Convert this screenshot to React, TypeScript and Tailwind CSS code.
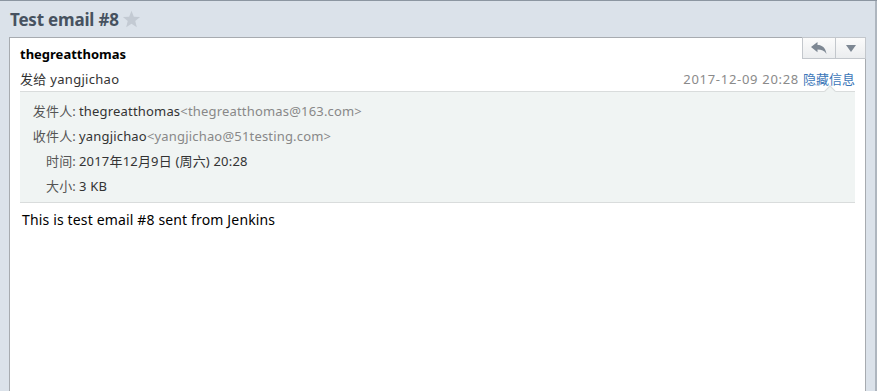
import React from "react";

const font = { fontFamily: '"Noto Sans", "Noto Sans CJK SC", sans-serif' };

export default function App() {
  return (
    <div
      className="w-[877px] h-[391px] overflow-hidden bg-[#dbe2ea] border-t border-[#8c96a1] flex"
      style={font}
    >
      <div className="flex-1 flex flex-col min-w-0">
        <div className="h-[36px] flex items-center pl-[10px] gap-[3px]">
          <span className="text-[17px] font-bold text-[#475260] leading-none tracking-[-0.2px]">Test email #8</span>
          <svg width="19" height="18" viewBox="0 0 24 23" className="mt-[-1px]">
            <path
              d="M12 1 L15 8.6 L23 9.1 L16.8 14.2 L18.8 22 L12 17.6 L5.2 22 L7.2 14.2 L1 9.1 L9 8.6 Z"
              fill="#c3cad3"
            />
          </svg>
        </div>
        <div className="flex-1 ml-[9px] mr-[9px] bg-white border border-[#a7abb0] border-b-0 relative">
          <div className="absolute top-[-1px] right-[-1px] flex h-[22px] border border-[#c3c7cc] bg-gradient-to-b from-[#fbfbfb] to-[#ebedef]">
            <div className="w-[33px] flex items-center justify-center border-r border-[#c3c7cc]">
              <svg width="16" height="12" viewBox="0 0 16 12">
                <path d="M0 5 L6.5 0 L6.5 3 C11 3 14.5 5.5 15.5 12 C13.5 8.8 10.5 7.6 6.5 7.6 L6.5 10.2 Z" fill="#7d8793" />
              </svg>
            </div>
            <div className="w-[29px] flex items-center justify-center">
              <svg width="10" height="7" viewBox="0 0 10 7">
                <path d="M0 0 L10 0 L5 7 Z" fill="#7d8793" />
              </svg>
            </div>
          </div>
          <div className="px-[10px]">
            <div className="pt-[7px] h-[28px] text-[13px] font-bold text-black leading-[18px]">thegreatthomas</div>
            <div className="h-[24px] flex items-center justify-between text-[13px] leading-[18px] pt-[1px]">
              <span className="text-[#333] tracking-[0.3px]">发给 yangjichao</span>
              <span>
                <span className="text-[#8a8a8a] tracking-[0.7px]">2017-12-09 20:28</span>
                <span className="text-[#3b76b8] ml-[4px]">隐藏信息</span>
              </span>
            </div>
            <div className="relative mt-[1px] bg-[#f0f4f3] border-t border-b border-[#d9dcdc] pt-[6px] pb-[4px] text-[13px] text-[#333]">
              <div className="absolute top-[-5px] right-[21px] w-[8px] h-[8px] bg-[#f0f4f3] border-t border-l border-[#d9dcdc] rotate-45" />
              {[
                ["发件人:", "thegreatthomas", "<thegreatthomas@163.com>"],
                ["收件人:", "yangjichao", "<yangjichao@51testing.com>"],
                ["时间:", "2017年12月9日 (周六) 20:28", ""],
                ["大小:", "3 KB", ""],
              ].map(([l, v, e]) => (
                <div key={l} className="h-[25px] flex items-center leading-[18px] tracking-[0.18px]">
                  <span className="w-[56px] text-right text-[#555]">{l}</span>
                  <span className="ml-[3px]">{v}</span>
                  {e && <span className="text-[#888]">{e}</span>}
                </div>
              ))}
            </div>
            <div className="pt-[8px] pl-[2px] text-[14px] text-black leading-[18px] tracking-[0.15px]">
              This is test email #8 sent from Jenkins
            </div>
          </div>
        </div>
      </div>
      <div className="w-[2px] h-full bg-[#aeb6bf]" />
    </div>
  );
}
